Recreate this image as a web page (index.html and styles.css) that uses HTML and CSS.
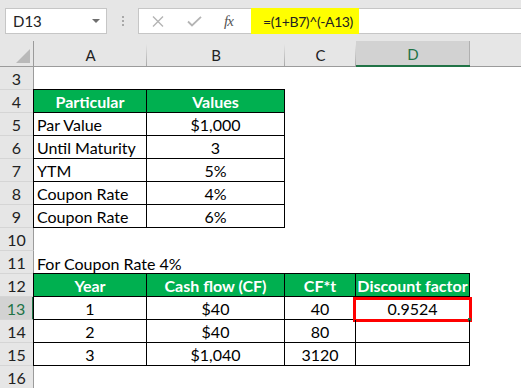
FILE: index.html
```html
<!DOCTYPE html>
<html lang="en">
<head>
    <meta charset="UTF-8">
    <meta name="viewport" content="width=device-width, initial-scale=1.0">
    <title>Discount factor</title>
    <link rel="stylesheet" href="styles.css">
</head>
<body>
    <!-- formula bar -->
    <div class="toolbar">
        <div class="namebox">
            <span>D13</span>
            <span class="caret"></span>
        </div>
        <div class="grip"><i></i><i></i><i></i></div>
        <div class="fbar">
            <div class="fbtns">
                <svg class="ico" width="12" height="11" viewBox="0 0 12 11">
                    <path d="M1 0.5 L11 10.5 M11 0.5 L1 10.5" stroke="#b4b4b4" stroke-width="1.4" fill="none"/>
                </svg>
                <svg class="ico" width="15" height="11" viewBox="0 0 15 11">
                    <path d="M1 5.5 L5 9.5 L14 0.8" stroke="#b4b4b4" stroke-width="1.8" fill="none"/>
                </svg>
                <span class="fx">fx</span>
            </div>
            <div class="formula">=(1+B7)^(-A13)</div>
        </div>
    </div>

    <!-- sheet -->
    <div class="sheet">
        <div class="corner"><span class="tri"></span></div>
        <div class="ch">A</div>
        <div class="ch">B</div>
        <div class="ch">C</div>
        <div class="ch sel">D</div>
        <div class="ch last"></div>

        <div class="rh">3</div><div></div><div></div><div></div><div></div><div></div>

        <div class="rh">4</div>
        <div class="b hd bl bt">Particular</div>
        <div class="b hd bt">Values</div>
        <div></div><div></div><div></div>

        <div class="rh">5</div>
        <div class="b bl l">Par Value</div>
        <div class="b">$1,000</div>
        <div></div><div></div><div></div>

        <div class="rh">6</div>
        <div class="b bl l">Until Maturity</div>
        <div class="b">3</div>
        <div></div><div></div><div></div>

        <div class="rh">7</div>
        <div class="b bl l">YTM</div>
        <div class="b">5%</div>
        <div></div><div></div><div></div>

        <div class="rh">8</div>
        <div class="b bl l">Coupon Rate</div>
        <div class="b">4%</div>
        <div></div><div></div><div></div>

        <div class="rh">9</div>
        <div class="b bl l">Coupon Rate</div>
        <div class="b">6%</div>
        <div></div><div></div><div></div>

        <div class="rh">10</div><div></div><div></div><div></div><div></div><div></div>

        <div class="rh">11</div>
        <div class="l over">For Coupon Rate 4%</div>
        <div></div><div></div><div></div><div></div>

        <div class="rh">12</div>
        <div class="b hd bl bt">Year</div>
        <div class="b hd bt">Cash flow (CF)</div>
        <div class="b hd bt">CF*t</div>
        <div class="b hd bt">Discount factor</div>
        <div></div>

        <div class="rh sel">13</div>
        <div class="b bl">1</div>
        <div class="b">$40</div>
        <div class="b">40</div>
        <div class="b active">0.9524<span class="box"></span><span class="handle"></span></div>
        <div></div>

        <div class="rh">14</div>
        <div class="b bl">2</div>
        <div class="b">$40</div>
        <div class="b">80</div>
        <div class="b"></div>
        <div></div>

        <div class="rh">15</div>
        <div class="b bl">3</div>
        <div class="b">$1,040</div>
        <div class="b">3120</div>
        <div class="b"></div>
        <div></div>

        <div class="rh">16</div><div></div><div></div><div></div><div></div><div></div>
    </div>
</body>
</html>
```

FILE: styles.css
```css
:root {
    --chrome: #e6e6e6;
    --chrome-sel: #d2d2d2;
    --excel-green: #217346;
    --head-green: #00b050;
    --line: #c6c6c6;
}

* {
    box-sizing: border-box;
    margin: 0;
    padding: 0;
}

body {
    width: 521px;
    height: 388px;
    overflow: hidden;
    background: #fff;
    color: #000;
    font-family: 'Lato', 'Liberation Sans', sans-serif;
}

/* ---------- formula bar ---------- */

.toolbar {
    height: 41px;
    background: var(--chrome);
    display: flex;
    align-items: flex-start;
    padding: 8px 0 0 5px;
}

.namebox {
    width: 102px;
    height: 26px;
    background: #fff;
    border: 1px solid var(--line);
    display: flex;
    align-items: center;
    justify-content: space-between;
    padding: 0 6px 0 7px;
    font-size: 15px;
    color: #222;
}

.caret {
    width: 0;
    height: 0;
    border-left: 4px solid transparent;
    border-right: 4px solid transparent;
    border-top: 4px solid #6e6e6e;
}

.grip {
    width: 31px;
    height: 26px;
    display: flex;
    flex-direction: column;
    align-items: center;
    justify-content: center;
    gap: 2px;
}

.grip i {
    width: 2px;
    height: 2px;
    background: #a8a8a8;
}

.fbar {
    flex: 1;
    height: 26px;
    display: flex;
    background: #fff;
    border: 1px solid var(--line);
    border-right: none;
}

.fbtns {
    width: 112px;
    display: flex;
    align-items: center;
    gap: 0;
    padding-left: 13px;
}

.fbtns .ico:first-child {
    margin-right: 23px;
}

.fbtns .ico:nth-child(2) {
    margin-right: 22px;
}

.fx {
    font-family: 'Liberation Serif', serif;
    font-style: italic;
    font-size: 15px;
    color: #555;
    letter-spacing: -1px;
}

.formula {
    width: 108px;
    background: #ffff00;
    margin: -1px 0;
    padding: 0 0 0 12px;
    display: flex;
    align-items: center;
    font-size: 14px;
    letter-spacing: -0.4px;
    color: #222;
    white-space: nowrap;
}

/* ---------- grid ---------- */

.sheet {
    display: grid;
    grid-template-columns: 34px 113px 138px 71px 114px 1fr;
    grid-template-rows: 26px repeat(14, 23px);
    font-size: 16px;
}

.sheet > div {
    display: flex;
    align-items: center;
    justify-content: center;
    white-space: nowrap;
    position: relative;
    padding-top: 1px;
}

.corner {
    background: var(--chrome);
    border-right: 1px solid #9b9b9b;
    border-bottom: 1px solid #9b9b9b;
}

.tri {
    position: absolute;
    right: 3px;
    bottom: 3px;
    width: 0;
    height: 0;
    border-left: 14px solid transparent;
    border-bottom: 14px solid #b9b9b9;
}

.ch {
    background: var(--chrome);
    border-bottom: 1px solid #9b9b9b;
    font-size: 15px;
    color: #222;
}

.sheet > .ch {
    padding-top: 2px;
}

.ch::after {
    content: '';
    position: absolute;
    right: 0;
    top: 3px;
    bottom: 0;
    width: 1px;
    background: linear-gradient(#e6e6e6, #a8a8a8);
}

.ch.last::after {
    display: none;
}

.ch.sel {
    background: var(--chrome-sel);
    color: var(--excel-green);
    border-bottom: 2px solid var(--excel-green);
}

.ch.sel::after {
    top: 0;
    background: #b0b0b0;
}

.rh {
    background: var(--chrome);
    border-right: 1px solid #9b9b9b;
    border-bottom: 1px solid #d5d5d5;
    font-size: 16px;
    color: #222;
}

.rh.sel {
    background: var(--chrome-sel);
    color: var(--excel-green);
    border-right: 2px solid var(--excel-green);
}

/* bordered table cells */
.b {
    border-right: 1px solid #000;
    border-bottom: 1px solid #000;
}

.bl {
    box-shadow: -1px 0 0 #000;
}

.bt {
    box-shadow: 0 -1px 0 #000;
}

.bl.bt {
    box-shadow: -1px 0 0 #000, 0 -1px 0 #000, -1px -1px 0 #000;
}

.hd {
    background: var(--head-green);
    color: #fff;
    font-weight: bold;
}

.sheet > .l {
    justify-content: flex-start;
    padding-left: 3px;
}

.over {
    overflow: visible;
}

.active .box {
    position: absolute;
    left: -3px;
    right: -3px;
    top: 0;
    bottom: -3px;
    border: 3px solid #ff0000;
}

.active .handle {
    position: absolute;
    right: -2px;
    bottom: -2px;
    width: 3px;
    height: 3px;
    background: var(--excel-green);
}
```
